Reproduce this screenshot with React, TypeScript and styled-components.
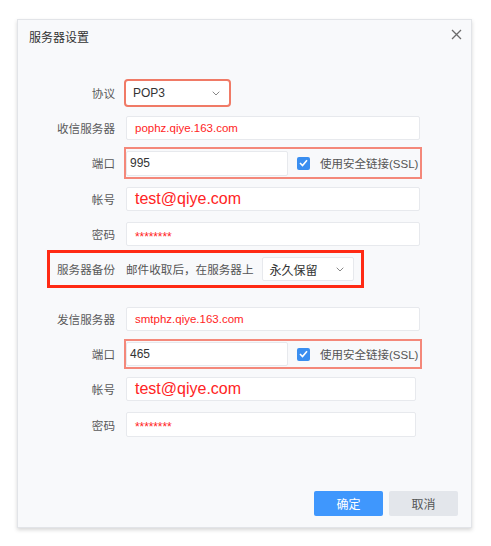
import React from "react";
import styled, { createGlobalStyle } from "styled-components";

const Global = createGlobalStyle`
  html, body { margin: 0; padding: 0; background: #ffffff; }
  body { font-family: "Liberation Sans", "Noto Sans CJK SC", sans-serif; }
  * { box-sizing: border-box; }
`;

const Page = styled.div`
  width: 491px;
  height: 546px;
  padding: 19px 0 0 17px;
`;

const Dialog = styled.div`
  width: 455px;
  height: 509px;
  background: #f8f9fb;
  border: 1px solid #e2e4e8;
  box-shadow: 0 2px 4px rgba(0, 0, 0, 0.16);
  display: flex;
  flex-direction: column;
`;

const Header = styled.div`
  display: flex;
  justify-content: space-between;
  align-items: flex-start;
  padding: 10px 9px 0 11px;
`;

const Title = styled.div`
  font-size: 12px;
  line-height: 17px;
  color: #333;
`;

const Close = styled.div`
  width: 11px;
  height: 11px;
  margin-top: -1px;
  display: flex;
`;

const Form = styled.div`
  display: flex;
  flex-direction: column;
  align-items: flex-start;
  padding-left: 32px;
`;

const Row = styled.div<{ $mt: number }>`
  display: flex;
  align-items: center;
  margin-top: ${(p) => p.$mt}px;
`;

const BackupRow = styled(Row)`
  outline: 3px solid #ff2a14;
  padding: 4px 7px 4px 0;
`;

const Label = styled.div`
  width: 65px;
  margin-right: 11px;
  text-align: right;
  font-size: 11.6px;
  color: #5a5a5a;
  white-space: nowrap;
`;

const Field = styled.div<{ $w: number; $h: number; $size?: number; $dark?: boolean; $pad?: number }>`
  width: ${(p) => p.$w}px;
  height: ${(p) => p.$h}px;
  background: #fff;
  border: 1px solid #e7e9ed;
  border-radius: 2px;
  display: flex;
  align-items: center;
  padding-left: ${(p) => p.$pad ?? 8}px;
  font-size: ${(p) => p.$size ?? 11.5}px;
  color: ${(p) => (p.$dark ? "#333" : "#ff2424")};
  white-space: nowrap;
  overflow: hidden;
`;

const Stars = styled.span`
  font-size: 12px;
  padding-top: 5px;
  letter-spacing: -0.1px;
`;

const Select = styled.div<{ $w: number; $flag?: boolean }>`
  width: ${(p) => p.$w}px;
  height: 24px;
  background: #fff;
  border: ${(p) => (p.$flag ? "none" : "1px solid #e7e9ed")};
  outline: ${(p) => (p.$flag ? "2px solid #f07a66" : "none")};
  border-radius: 2px;
  display: flex;
  align-items: center;
  justify-content: space-between;
  padding: 0 9px 0 7px;
  font-size: 12px;
  color: #333;
`;

const PortGroup = styled.div<{ $h: number }>`
  width: 294px;
  height: ${(p) => p.$h}px;
  outline: 2px solid #f4887a;
  display: flex;
  align-items: center;
`;

const Check = styled.span`
  width: 13px;
  height: 13px;
  background: #3a8ef0;
  border-radius: 2px;
  margin-left: 9px;
  display: flex;
  align-items: center;
  justify-content: center;
`;

const CheckText = styled.span`
  margin-left: 10px;
  font-size: 11.5px;
  color: #555;
  white-space: nowrap;
`;

const Hint = styled.span`
  font-size: 11.6px;
  color: #555;
  margin-right: 8px;
  white-space: nowrap;
`;

const Footer = styled.div`
  margin-top: auto;
  display: flex;
  justify-content: flex-end;
  gap: 6px;
  padding: 0 13px 11px 0;
`;

const Button = styled.button<{ $primary?: boolean }>`
  width: 69px;
  height: 25px;
  border: none;
  border-radius: 2px;
  font-family: inherit;
  font-size: 12px;
  background: ${(p) => (p.$primary ? "#3f97fd" : "#e3e6eb")};
  color: ${(p) => (p.$primary ? "#fff" : "#555")};
`;

const Chevron = () => (
  <svg width="8" height="5" viewBox="0 0 8 5">
    <path d="M0.7 0.7 L4 4 L7.3 0.7" fill="none" stroke="#888" strokeWidth="1" />
  </svg>
);

const Tick = () => (
  <svg width="9" height="8" viewBox="0 0 9 8">
    <path d="M1 4 L3.5 6.5 L8 1.2" fill="none" stroke="#fff" strokeWidth="1.6" />
  </svg>
);

const XIcon = () => (
  <svg width="11" height="11" viewBox="0 0 11 11">
    <path d="M1 1 L10 10 M10 1 L1 10" stroke="#6b6b6b" strokeWidth="1.3" />
  </svg>
);

export default function App() {
  return (
    <Page>
      <Global />
      <Dialog>
        <Header>
          <Title>服务器设置</Title>
          <Close>
            <XIcon />
          </Close>
        </Header>
        <Form>
          <Row $mt={34}>
            <Label>协议</Label>
            <Select $w={103} $flag>
              <span>POP3</span>
              <Chevron />
            </Select>
          </Row>
          <Row $mt={11}>
            <Label>收信服务器</Label>
            <Field $w={294} $h={24}>pophz.qiye.163.com</Field>
          </Row>
          <Row $mt={9}>
            <Label>端口</Label>
            <PortGroup $h={28}>
              <Field $w={162} $h={25} $dark $size={12} $pad={3}>995</Field>
              <Check>
                <Tick />
              </Check>
              <CheckText>使用安全链接(SSL)</CheckText>
            </PortGroup>
          </Row>
          <Row $mt={10}>
            <Label>帐号</Label>
            <Field $w={294} $h={24} $size={16}>test@qiye.com</Field>
          </Row>
          <Row $mt={11}>
            <Label>密码</Label>
            <Field $w={294} $h={24}>
              <Stars>********</Stars>
            </Field>
          </Row>
          <BackupRow $mt={7}>
            <Label>服务器备份</Label>
            <Hint>邮件收取后，在服务器上</Hint>
            <Select $w={92}>
              <span>永久保留</span>
              <Chevron />
            </Select>
          </BackupRow>
          <Row $mt={22}>
            <Label>发信服务器</Label>
            <Field $w={294} $h={24}>smtphz.qiye.163.com</Field>
          </Row>
          <Row $mt={10}>
            <Label>端口</Label>
            <PortGroup $h={26}>
              <Field $w={162} $h={24} $dark $size={12} $pad={3}>465</Field>
              <Check>
                <Tick />
              </Check>
              <CheckText>使用安全链接(SSL)</CheckText>
            </PortGroup>
          </Row>
          <Row $mt={10}>
            <Label>帐号</Label>
            <Field $w={290} $h={24} $size={16}>test@qiye.com</Field>
          </Row>
          <Row $mt={11}>
            <Label>密码</Label>
            <Field $w={290} $h={25}>
              <Stars>********</Stars>
            </Field>
          </Row>
        </Form>
        <Footer>
          <Button $primary>确定</Button>
          <Button>取消</Button>
        </Footer>
      </Dialog>
    </Page>
  );
}
